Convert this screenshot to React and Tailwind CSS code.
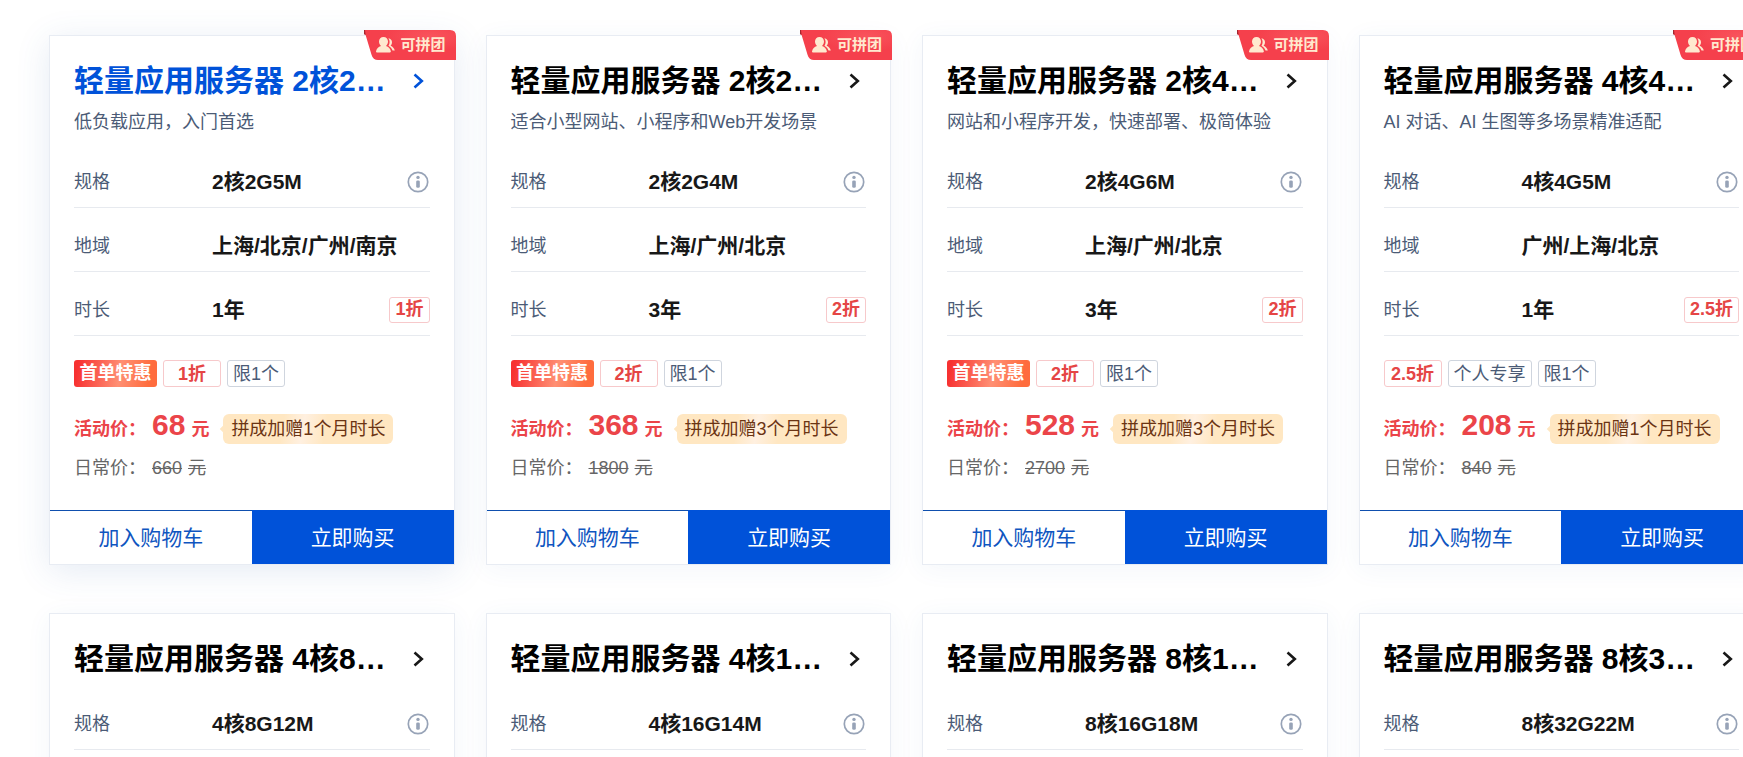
import React from 'react'

const servers = [
  {
    title: '轻量应用服务器 2核2…',
    desc: '低负载应用，入门首选',
    spec: '2核2G5M',
    region: '上海/北京/广州/南京',
    duration: '1年',
    discount: '1折',
    firstOrder: true,
    tags: ['限1个'],
    price: '68',
    gift: '拼成加赠1个月时长',
    dailyPrice: '660',
    active: true
  },
  {
    title: '轻量应用服务器 2核2…',
    desc: '适合小型网站、小程序和Web开发场景',
    spec: '2核2G4M',
    region: '上海/广州/北京',
    duration: '3年',
    discount: '2折',
    firstOrder: true,
    tags: ['限1个'],
    price: '368',
    gift: '拼成加赠3个月时长',
    dailyPrice: '1800'
  },
  {
    title: '轻量应用服务器 2核4…',
    desc: '网站和小程序开发，快速部署、极简体验',
    spec: '2核4G6M',
    region: '上海/广州/北京',
    duration: '3年',
    discount: '2折',
    firstOrder: true,
    tags: ['限1个'],
    price: '528',
    gift: '拼成加赠3个月时长',
    dailyPrice: '2700'
  },
  {
    title: '轻量应用服务器 4核4…',
    desc: 'AI 对话、AI 生图等多场景精准适配',
    spec: '4核4G5M',
    region: '广州/上海/北京',
    duration: '1年',
    discount: '2.5折',
    tags: ['个人专享', '限1个'],
    price: '208',
    gift: '拼成加赠1个月时长',
    dailyPrice: '840'
  }
]

const moreServers = [
  { title: '轻量应用服务器 4核8…', spec: '4核8G12M' },
  { title: '轻量应用服务器 4核1…', spec: '4核16G14M' },
  { title: '轻量应用服务器 8核1…', spec: '8核16G18M' },
  { title: '轻量应用服务器 8核3…', spec: '8核32G22M' }
]

const InfoIcon = () => (
  <svg className="w-[22px] h-[22px] mr-px" viewBox="0 0 22 22" fill="none">
    <circle cx="11" cy="11" r="9.7" stroke="#97a3b7" strokeWidth="1.7" />
    <circle cx="11" cy="6.4" r="1.7" fill="#97a3b7" />
    <rect x="9.2" y="9.4" width="3.6" height="7.4" rx="1.4" fill="#97a3b7" />
  </svg>
)

const GroupBadge = () => (
  <div className="absolute -top-[6px] -right-[2px] w-[92px] h-[30px] flex items-center pl-3 gap-[6px]">
    <svg className="absolute inset-0 w-full h-full" viewBox="0 0 92 30" fill="none">
      <defs>
        <radialGradient id="badge-shine" cx="0.72" cy="0.2" r="0.5">
          <stop offset="0%" stopColor="#f9535c" />
          <stop offset="100%" stopColor="#f5404c" />
        </radialGradient>
      </defs>
      <path d="M0 0H86Q92 0 92 6V30H14Q9 30 7.6 25L1.6 5L0 4Z" fill="url(#badge-shine)" />
      <path d="M0 0H1L1.6 5L0 4Z" fill="#a3262f" />
    </svg>
    <svg className="relative w-[19px] h-[16px]" viewBox="0 0 19 16" fill="#ffe9cf">
      <path d="M7.5 0C4.8 0 3 2 3 4.6C3 6.5 3.8 8 5 9C2.4 9.8 0.5 11.6 0 14.4C-0.1 15 0.3 15.4 0.9 15.4H14C14.6 15.4 15 15 14.9 14.4C14.4 11.6 12.6 9.8 10 9C11.2 8 12 6.5 12 4.6C12 2 10.2 0 7.5 0Z" />
      <path d="M12.4 1.2C14.8 1.6 16 3.2 16 5.2C16 6.7 15.4 7.9 14.6 8.7C16.8 9.6 18.3 11.4 18.8 13.6H16.5C15.8 11.5 14.4 9.8 12.4 8.8C13.2 7.7 13.6 6.2 13.6 4.7C13.6 3.4 13.2 2.2 12.4 1.2Z" />
    </svg>
    <span className="relative text-[15px] leading-[30px] font-bold text-[#ffe9cf]">可拼团</span>
  </div>
)

const CardTitle = ({ title, active }) => (
  <a
    href="#"
    className={`flex items-center justify-between pr-[6px] ${active ? 'text-[#0052d9]' : 'text-black'}`}
  >
    <h3 className="text-[30px] leading-[38px] font-bold whitespace-nowrap">{title}</h3>
    <svg className="w-[11px] h-[16px]" viewBox="0 0 11 16" fill="none">
      <path d="M1.5 1.5L8.8 8L1.5 14.5" stroke={active ? '#0052d9' : '#181818'} strokeWidth="2.6" />
    </svg>
  </a>
)

const SpecRow = ({ label, value, children }) => (
  <div className="h-16 pt-3 flex items-center border-b border-[#e7eaef]">
    <dt className="w-[138px] pt-[2px] text-[18px] text-[#4b5b76]">{label}</dt>
    <dd className="flex-1 flex items-center justify-between">
      <span className="text-[21px] font-bold text-[#181818]">{value}</span>
      {children}
    </dd>
  </div>
)

const ServerCard = ({ item }) => (
  <article
    className={`relative flex flex-col border border-[#e8ecf3] bg-white ${
      item.active ? 'shadow-[0_6px_32px_rgba(55,99,170,0.13)]' : 'shadow-[0_4px_24px_rgba(55,99,170,0.06)]'
    }`}
  >
    <GroupBadge />
    <div className="px-6 pt-[26px]">
      <CardTitle title={item.title} active={item.active} />
      <p className="mt-[8px] text-[18px] leading-[28px] text-[#4b5b76] whitespace-nowrap">{item.desc}</p>
      <dl className="mt-[8px]">
        <SpecRow label="规格" value={item.spec}>
          <InfoIcon />
        </SpecRow>
        <SpecRow label="地域" value={item.region} />
        <SpecRow label="时长" value={item.duration}>
          <span className="h-[26px] px-[5px] flex items-center rounded-[3px] border border-[#f7c9cb] text-[18px] font-bold text-[#e54545]">
            {item.discount}
          </span>
        </SpecRow>
      </dl>

      {/* Promotion tags */}
      <div className="mt-6 flex gap-[6px] text-[18px] leading-[27px] whitespace-nowrap">
        {item.firstOrder && (
          <span className="h-[27px] w-[83px] rounded-[3px] bg-[linear-gradient(100deg,#f73131_5%,#ff8f73_55%,#ff6c3d_90%)] text-center font-bold text-white">
            首单特惠
          </span>
        )}
        <span className="h-[27px] w-[58px] rounded-[3px] border border-[#f7c9cb] text-center font-bold text-[#e54545]">
          {item.discount}
        </span>
        {item.tags.map((tag) => (
          <span key={tag} className="h-[27px] px-[5px] rounded-[3px] border border-[#cfd5de] text-[#4b5b76]">
            {tag}
          </span>
        ))}
      </div>

      {/* Prices */}
      <div className="mt-[18px] h-[40px] flex items-baseline text-[18px] leading-[40px] font-bold text-[#eb4449] whitespace-nowrap">
        <span className="w-[78px]">活动价：</span>
        <span className="text-[30px]">{item.price}</span>
        <span className="ml-[6px]">元</span>
        <span className="relative ml-[14px] px-[8px] h-[30px] rounded-[6px] bg-[linear-gradient(100deg,#ffe7c2_35%,#fff0e0_47%,#ffe7c2_60%)] leading-[30px] font-normal text-[#6b3413]">
          <i className="absolute -left-[2px] top-[12px] size-[6px] rotate-45 bg-[#ffe7c2]" />
          {item.gift}
        </span>
      </div>
      <div className="mt-[5px] flex text-[18px] leading-[36px] text-[#666666]">
        <span className="w-[78px]">日常价：</span>
        <s>{item.dailyPrice}</s>
        <s className="ml-[6px]">元</s>
      </div>
    </div>

    <div className="mt-6 grid grid-cols-2 text-[21px] leading-[53px]">
      <button type="button" className="border-t border-[#0f4fae] text-[#0f55c0]">
        加入购物车
      </button>
      <button type="button" className="border-t border-[#0052d9] bg-[#0052d9] text-white">
        立即购买
      </button>
    </div>
  </article>
)

const App = () => {
  return (
    <main className="h-screen overflow-hidden bg-white font-['Liberation_Sans','Noto_Sans_CJK_SC',sans-serif]">
      <section className="-mr-[21px] pl-[49px] pt-[35px] grid grid-cols-4 gap-x-[31px] gap-y-12">
        {servers.map((item) => (
          <ServerCard key={item.spec} item={item} />
        ))}
        {moreServers.map((item) => (
          <article
            key={item.spec}
            className="px-6 pt-[26px] pb-12 border border-[#e8ecf3] bg-white shadow-[0_4px_24px_rgba(55,99,170,0.06)]"
          >
            <CardTitle title={item.title} />
            <dl className="mt-[8px]">
              <SpecRow label="规格" value={item.spec}>
                <InfoIcon />
              </SpecRow>
            </dl>
          </article>
        ))}
      </section>
    </main>
  )
}

export default App
